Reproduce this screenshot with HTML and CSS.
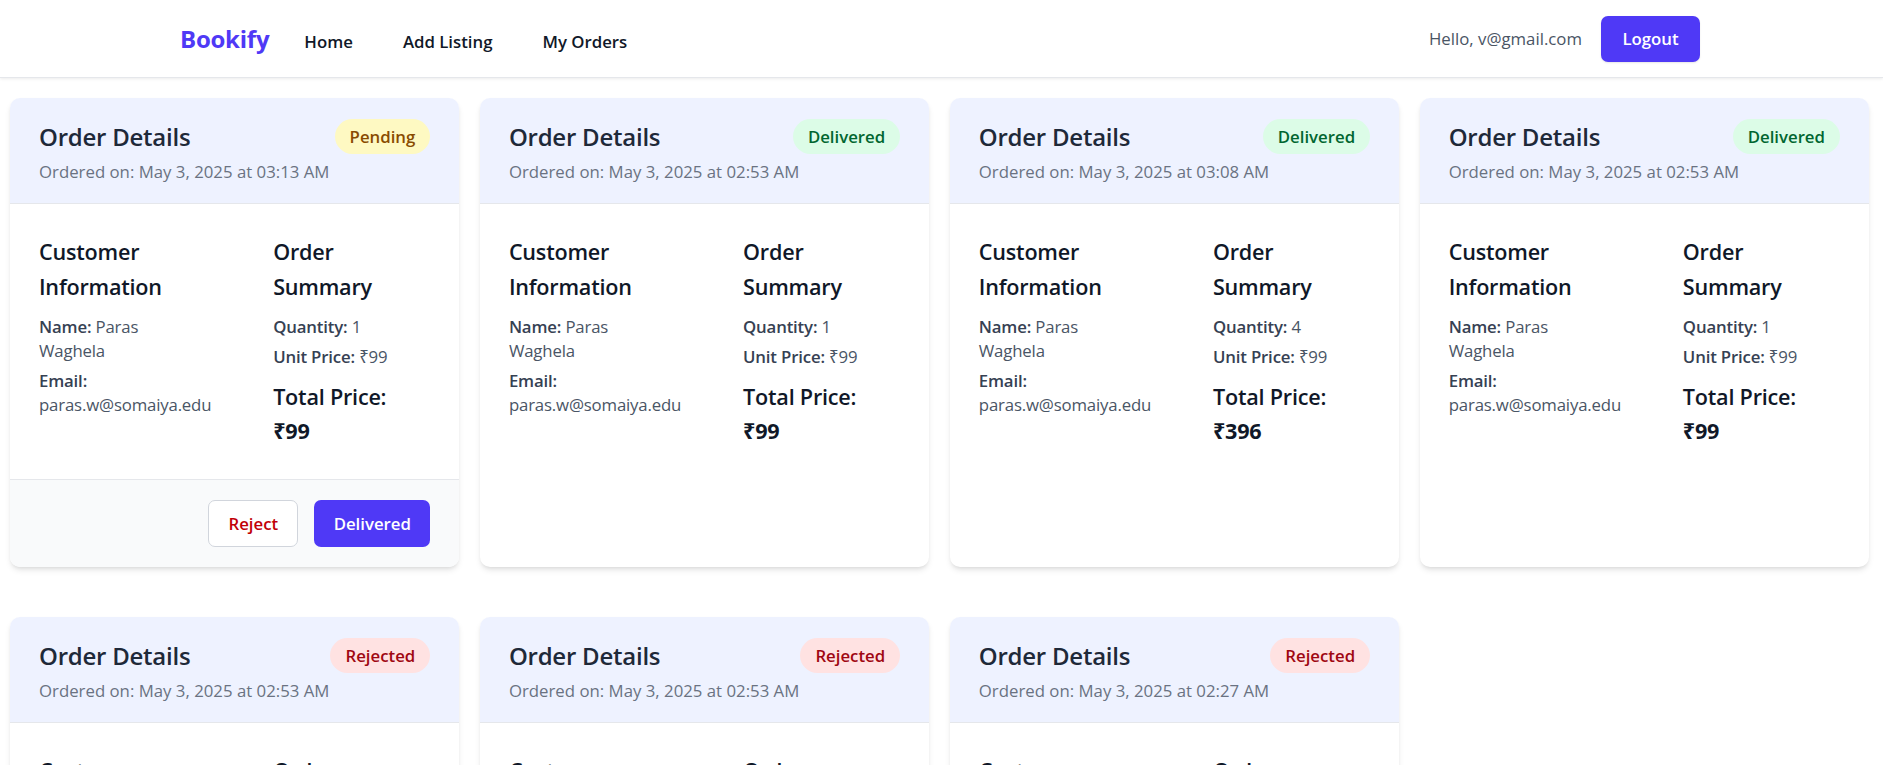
FILE: index.html
```html
<!DOCTYPE html>
<html lang="en">
<head>
<meta charset="utf-8">
<title>Bookify - Orders</title>
<link rel="stylesheet" href="styles.css">
</head>
<body>
<nav class="nav">
  <div class="nav-left">
    <span class="logo">Bookify</span>
    <a class="nav-link" href="#">Home</a>
    <a class="nav-link" href="#">Add Listing</a>
    <a class="nav-link" href="#">My Orders</a>
  </div>
  <div class="nav-right">
    <span class="hello">Hello, v@gmail.com</span>
    <button class="btn-primary logout">Logout</button>
  </div>
</nav>

<main class="grid">
  <div class="card">
    <div class="card-head">
      <div class="head-row"><h2 class="title">Order Details</h2><span class="badge pending">Pending</span></div>
      <p class="date">Ordered on: May 3, 2025 at 03:13 AM</p>
    </div>
    <div class="card-body">
      <div class="col">
        <h3 class="sub">Customer Information</h3>
        <p class="line"><b>Name:</b> Paras Waghela</p>
        <p class="line"><b>Email:</b> paras.w@somaiya.edu</p>
      </div>
      <div class="col">
        <h3 class="sub">Order Summary</h3>
        <p class="line"><b>Quantity:</b> 1</p>
        <p class="line"><b>Unit Price:</b> ₹99</p>
        <p class="total">Total Price: <strong>₹99</strong></p>
      </div>
    </div>
    <div class="card-foot">
      <button class="btn-reject">Reject</button>
      <button class="btn-primary deliver">Delivered</button>
    </div>
  </div>

  <div class="card">
    <div class="card-head">
      <div class="head-row"><h2 class="title">Order Details</h2><span class="badge delivered">Delivered</span></div>
      <p class="date">Ordered on: May 3, 2025 at 02:53 AM</p>
    </div>
    <div class="card-body">
      <div class="col">
        <h3 class="sub">Customer Information</h3>
        <p class="line"><b>Name:</b> Paras Waghela</p>
        <p class="line"><b>Email:</b> paras.w@somaiya.edu</p>
      </div>
      <div class="col">
        <h3 class="sub">Order Summary</h3>
        <p class="line"><b>Quantity:</b> 1</p>
        <p class="line"><b>Unit Price:</b> ₹99</p>
        <p class="total">Total Price: <strong>₹99</strong></p>
      </div>
    </div>
  </div>

  <div class="card">
    <div class="card-head">
      <div class="head-row"><h2 class="title">Order Details</h2><span class="badge delivered">Delivered</span></div>
      <p class="date">Ordered on: May 3, 2025 at 03:08 AM</p>
    </div>
    <div class="card-body">
      <div class="col">
        <h3 class="sub">Customer Information</h3>
        <p class="line"><b>Name:</b> Paras Waghela</p>
        <p class="line"><b>Email:</b> paras.w@somaiya.edu</p>
      </div>
      <div class="col">
        <h3 class="sub">Order Summary</h3>
        <p class="line"><b>Quantity:</b> 4</p>
        <p class="line"><b>Unit Price:</b> ₹99</p>
        <p class="total">Total Price: <strong>₹396</strong></p>
      </div>
    </div>
  </div>

  <div class="card">
    <div class="card-head">
      <div class="head-row"><h2 class="title">Order Details</h2><span class="badge delivered">Delivered</span></div>
      <p class="date">Ordered on: May 3, 2025 at 02:53 AM</p>
    </div>
    <div class="card-body">
      <div class="col">
        <h3 class="sub">Customer Information</h3>
        <p class="line"><b>Name:</b> Paras Waghela</p>
        <p class="line"><b>Email:</b> paras.w@somaiya.edu</p>
      </div>
      <div class="col">
        <h3 class="sub">Order Summary</h3>
        <p class="line"><b>Quantity:</b> 1</p>
        <p class="line"><b>Unit Price:</b> ₹99</p>
        <p class="total">Total Price: <strong>₹99</strong></p>
      </div>
    </div>
  </div>

  <div class="card">
    <div class="card-head">
      <div class="head-row"><h2 class="title">Order Details</h2><span class="badge rejected">Rejected</span></div>
      <p class="date">Ordered on: May 3, 2025 at 02:53 AM</p>
    </div>
    <div class="card-body">
      <div class="col">
        <h3 class="sub">Customer Information</h3>
        <p class="line"><b>Name:</b> Paras Waghela</p>
        <p class="line"><b>Email:</b> paras.w@somaiya.edu</p>
      </div>
      <div class="col">
        <h3 class="sub">Order Summary</h3>
        <p class="line"><b>Quantity:</b> 1</p>
        <p class="line"><b>Unit Price:</b> ₹99</p>
        <p class="total">Total Price: <strong>₹99</strong></p>
      </div>
    </div>
  </div>

  <div class="card">
    <div class="card-head">
      <div class="head-row"><h2 class="title">Order Details</h2><span class="badge rejected">Rejected</span></div>
      <p class="date">Ordered on: May 3, 2025 at 02:53 AM</p>
    </div>
    <div class="card-body">
      <div class="col">
        <h3 class="sub">Customer Information</h3>
        <p class="line"><b>Name:</b> Paras Waghela</p>
        <p class="line"><b>Email:</b> paras.w@somaiya.edu</p>
      </div>
      <div class="col">
        <h3 class="sub">Order Summary</h3>
        <p class="line"><b>Quantity:</b> 1</p>
        <p class="line"><b>Unit Price:</b> ₹99</p>
        <p class="total">Total Price: <strong>₹99</strong></p>
      </div>
    </div>
  </div>

  <div class="card">
    <div class="card-head">
      <div class="head-row"><h2 class="title">Order Details</h2><span class="badge rejected">Rejected</span></div>
      <p class="date">Ordered on: May 3, 2025 at 02:27 AM</p>
    </div>
    <div class="card-body">
      <div class="col">
        <h3 class="sub">Customer Information</h3>
        <p class="line"><b>Name:</b> Paras Waghela</p>
        <p class="line"><b>Email:</b> paras.w@somaiya.edu</p>
      </div>
      <div class="col">
        <h3 class="sub">Order Summary</h3>
        <p class="line"><b>Quantity:</b> 1</p>
        <p class="line"><b>Unit Price:</b> ₹99</p>
        <p class="total">Total Price: <strong>₹99</strong></p>
      </div>
    </div>
  </div>
</main>
</body>
</html>
```

FILE: styles.css
```css
* { box-sizing: border-box; }

body {
  margin: 0;
  background: #ffffff;
  font-family: "Open Sans", "Noto Sans", sans-serif;
  color: #101828;
}

h2, h3, p { margin: 0; }

.nav {
  height: 78px;
  display: flex;
  align-items: center;
  justify-content: space-between;
  padding: 0 183px 0 180px;
  background: #ffffff;
  border-bottom: 1px solid #e5e7eb;
  box-shadow: 0 1px 3px rgba(0, 0, 0, 0.08);
}

.nav-left {
  display: flex;
  align-items: center;
}

.logo {
  font-size: 24px;
  font-weight: 700;
  color: #4f39f6;
  margin-right: 35px;
  letter-spacing: -0.01em;
}

.nav-link {
  font-size: 16.8px;
  font-weight: 600;
  color: #101828;
  text-decoration: none;
  margin-right: 50px;
  margin-top: 5px;
}

.nav-right {
  display: flex;
  align-items: center;
  gap: 19px;
}

.hello {
  font-size: 16.8px;
  color: #4a5565;
}

.btn-primary {
  border: none;
  background: #4f39f6;
  color: #ffffff;
  font-family: inherit;
  font-size: 16.8px;
  border-radius: 7px;
  height: 47px;
}

.logout {
  font-weight: 600;
  width: 99px;
  height: 46px;
  box-shadow: 0 1px 2px rgba(0, 0, 0, 0.1);
}

.grid {
  display: grid;
  grid-template-columns: repeat(4, minmax(0, 1fr));
  column-gap: 20.6px;
  row-gap: 50px;
  padding: 20px 14px 40px 10px;
}

.card {
  background: #ffffff;
  border-radius: 10px;
  overflow: hidden;
  display: flex;
  flex-direction: column;
  box-shadow: 0 4px 6px -1px rgba(0, 0, 0, 0.1), 0 2px 4px -2px rgba(0, 0, 0, 0.1);
}

.card-head {
  background: #eef2ff;
  padding: 21px 29px 19px;
  border-bottom: 1px solid #e5e7eb;
}

.head-row {
  display: flex;
  align-items: center;
  justify-content: space-between;
  min-height: 35px;
}

.title {
  font-size: 24px;
  font-weight: 600;
  color: #1e2939;
  line-height: 33px;
  letter-spacing: -0.01em;
}

.badge {
  height: 35px;
  display: inline-flex;
  align-items: center;
  padding: 0 15px;
  border-radius: 999px;
  font-size: 16.8px;
  font-weight: 600;
}

.pending { background: #fef9c2; color: #894b00; }
.delivered { background: #dcfce7; color: #016630; }
.rejected { background: #ffe2e2; color: #9f0712; }

.date {
  margin-top: 6px;
  font-size: 16.8px;
  line-height: 24px;
  color: #6a7282;
}

.card-body {
  flex: 1;
  display: grid;
  grid-template-columns: repeat(2, minmax(0, 1fr));
  column-gap: 77px;
  padding: 30px 29px 31px;
}

.sub {
  font-size: 21.6px;
  font-weight: 600;
  line-height: 35px;
  color: #101828;
  margin-bottom: 11px;
  letter-spacing: -0.01em;
}

.line {
  font-size: 16.8px;
  line-height: 24px;
  color: #4a5565;
  margin-bottom: 6px;
  letter-spacing: -0.01em;
}

.line b {
  font-weight: 600;
  color: #364153;
}

.total {
  margin-top: 11px;
  font-size: 21.6px;
  font-weight: 600;
  line-height: 34px;
  color: #101828;
  letter-spacing: -0.01em;
}

.total strong {
  display: block;
  font-weight: 700;
}

.card-foot {
  display: flex;
  justify-content: flex-end;
  gap: 16px;
  padding: 20px 29px 20px;
  background: #f9fafb;
  border-top: 1px solid #e5e7eb;
}

.btn-reject {
  width: 90px;
  height: 47px;
  border: 1px solid #d1d5dc;
  border-radius: 7px;
  background: #ffffff;
  color: #c10007;
  font-family: inherit;
  font-size: 16.8px;
  font-weight: 600;
}

.deliver {
  width: 116px;
  font-weight: 600;
}
```
